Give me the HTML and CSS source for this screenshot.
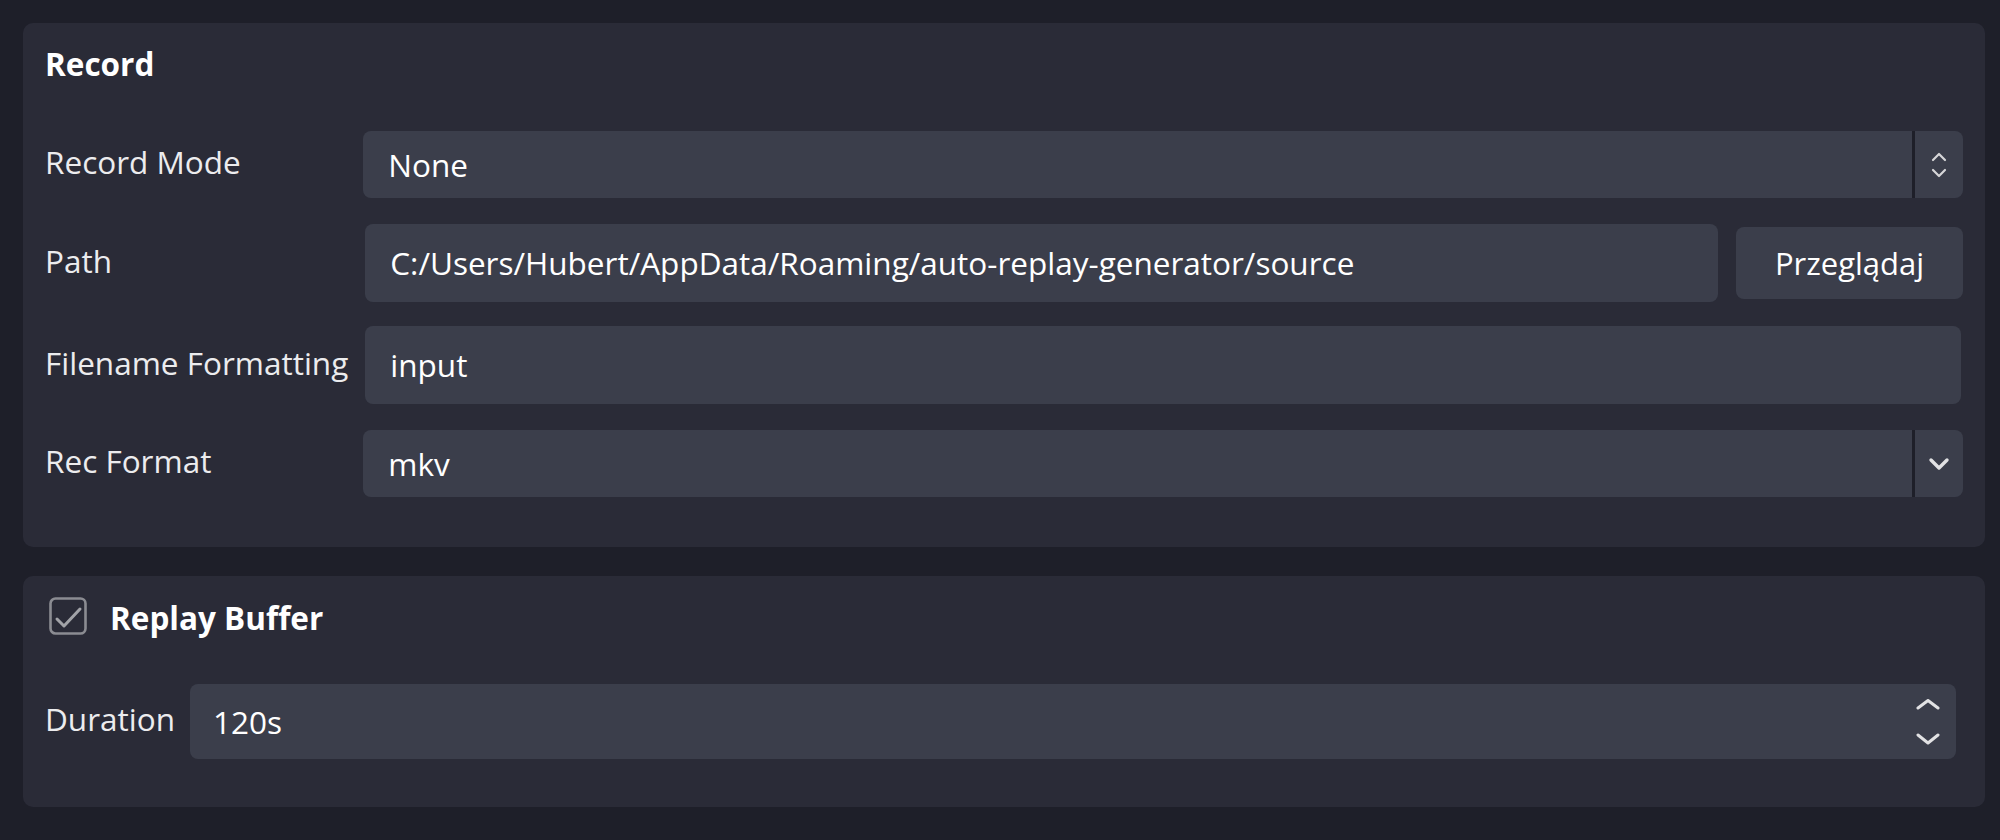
FILE: index.html
```html
<!DOCTYPE html>
<html lang="en">
<head>
  <meta charset="UTF-8">
  <title>Record settings</title>
  <link rel="stylesheet" href="styles.css">
</head>
<body>
  <div class="page">
    <div class="panel record">
      <p class="title">Record</p>
      <div class="form">
        <p class="label">Record Mode</p>
        <div class="select">
          <span class="select-value">None</span>
          <span class="select-btn">
            <svg width="16" height="26" viewBox="0 0 16 26">
              <polyline points="2,8 8,2 14,8" fill="none" stroke="#d6d6d8" stroke-width="2.2" stroke-linecap="round" stroke-linejoin="round"/>
              <polyline points="2,18 8,24 14,18" fill="none" stroke="#d6d6d8" stroke-width="2.2" stroke-linecap="round" stroke-linejoin="round"/>
            </svg>
          </span>
        </div>

        <p class="label">Path</p>
        <div class="path-field">
          <div class="text-input path-input">C:/Users/Hubert/AppData/Roaming/auto-replay-generator/source</div>
          <button class="browse">Przeglądaj</button>
        </div>

        <p class="label">Filename Formatting</p>
        <div class="text-input">input</div>

        <p class="label">Rec Format</p>
        <div class="select">
          <span class="select-value">mkv</span>
          <span class="select-btn">
            <svg width="22" height="14" viewBox="0 0 22 14">
              <polyline points="3,3 11,11 19,3" fill="none" stroke="#e2e2e4" stroke-width="3.4" stroke-linecap="round" stroke-linejoin="round"/>
            </svg>
          </span>
        </div>
      </div>
    </div>

    <div class="panel replay">
      <div class="title check-title">
        <svg class="checkbox" width="38" height="38" viewBox="0 0 38 38">
          <rect x="1.5" y="1.5" width="35" height="35" rx="5" fill="none" stroke="#8b8c92" stroke-width="2.6"/>
          <polyline points="8,22 15,29 31,12" fill="none" stroke="#a2a3a8" stroke-width="3" stroke-linecap="round" stroke-linejoin="round"/>
        </svg>
        <span>Replay Buffer</span>
      </div>
      <div class="form">
        <p class="label">Duration</p>
        <div class="spinbox">
          <span class="select-value">120s</span>
          <span class="spin-btns">
            <svg width="24" height="46" viewBox="0 0 24 46">
              <polyline points="2,9 12,1.5 22,9" fill="none" stroke="#e2e2e4" stroke-width="3" stroke-linecap="round" stroke-linejoin="round"/>
              <polyline points="2,36 12,44 22,36" fill="none" stroke="#e2e2e4" stroke-width="3" stroke-linecap="round" stroke-linejoin="round"/>
            </svg>
          </span>
        </div>
      </div>
    </div>
  </div>
</body>
</html>
```

FILE: styles.css
```css
body {
  margin: 0;
  background-color: #1e1f29;
  font-family: "Open Sans", "Noto Sans", sans-serif;
  font-size: 31.5px;
  color: #ececee;
}
p {
  margin: 0;
}
.page {
  padding: 23px 15px 33px 23px;
  display: flex;
  flex-direction: column;
  gap: 29px;
}
.panel {
  background-color: #2a2b37;
  border-radius: 10px;
  padding: 20px 22px 48px 22px;
}
.replay {
  padding-top: 21px;
}
.title {
  font-weight: 700;
  line-height: 42px;
  height: 42px;
  color: #ffffff;
}
.check-title {
  display: flex;
  align-items: flex-start;
}
.checkbox {
  margin: 0 23px 0 4px;
  flex-shrink: 0;
}
.form {
  display: grid;
  grid-template-columns: max-content 1fr;
  column-gap: 15px;
  row-gap: 24px;
  align-items: center;
  margin-top: 44px;
}
.replay .form {
  margin-top: 45px;
}
.label {
  line-height: 42px;
  padding-bottom: 5px;
  white-space: nowrap;
}
.select {
  height: 67px;
  margin: 2px 0;
  background-color: #3b3e4b;
  border-radius: 8px;
  display: flex;
  align-items: center;
}
.select-value {
  flex: 1;
  padding-left: 25px;
  line-height: 42px;
  color: #ffffff;
}
.select-btn {
  width: 48px;
  height: 100%;
  border-left: 3px solid #1e1f29;
  display: flex;
  justify-content: center;
  align-items: center;
}
.text-input {
  height: 78px;
  margin: 0 2px;
  padding-left: 25px;
  background-color: #3b3e4b;
  border-radius: 8px;
  display: flex;
  align-items: center;
  line-height: 42px;
  color: #ffffff;
}
.path-field {
  display: flex;
  align-items: center;
}
.path-input {
  flex: 1;
  margin-right: 0;
}
.browse {
  width: 227px;
  height: 72px;
  margin-left: 18px;
  background-color: #3b3e4b;
  border: none;
  border-radius: 8px;
  font-family: inherit;
  font-size: 31px;
  color: #ffffff;
  padding: 0;
}
.spinbox {
  height: 75px;
  margin-right: 7px;
  background-color: #3b3e4b;
  border-radius: 8px;
  display: flex;
  align-items: center;
}
.spinbox .select-value {
  padding-left: 23px;
}
.spin-btns {
  width: 56px;
  display: flex;
  justify-content: center;
  align-items: center;
}
```
